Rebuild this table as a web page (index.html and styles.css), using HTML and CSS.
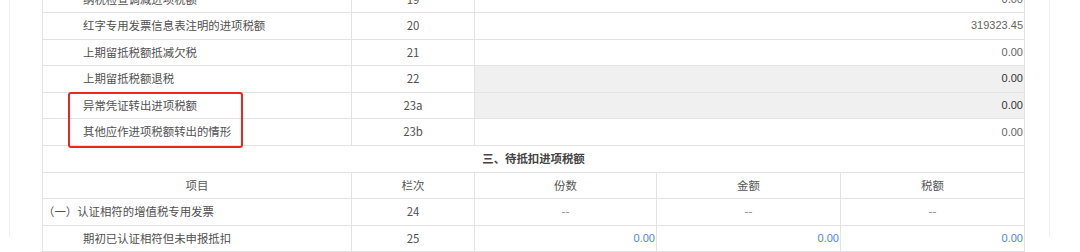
FILE: index.html
```html
<!DOCTYPE html>
<html lang="zh-CN">
<head>
<meta charset="utf-8">
<title>进项税额明细</title>
<link rel="stylesheet" href="styles.css">
</head>
<body>
<div class="panel">
  <div class="sheet">
    <div class="grid">
      <div class="c lbl ind">纳税检查调减进项税额</div><div class="c no">19</div><div class="c val span3">0.00</div>
      <div class="c lbl ind">红字专用发票信息表注明的进项税额</div><div class="c no">20</div><div class="c val span3">319323.45</div>
      <div class="c lbl ind">上期留抵税额抵减欠税</div><div class="c no">21</div><div class="c val span3">0.00</div>
      <div class="c lbl ind">上期留抵税额退税</div><div class="c no">22</div><div class="c val span3 ro">0.00</div>
      <div class="c lbl ind">异常凭证转出进项税额</div><div class="c no">23a</div><div class="c val span3 ro">0.00</div>
      <div class="c lbl ind">其他应作进项税额转出的情形</div><div class="c no">23b</div><div class="c val span3">0.00</div>
      <div class="c sec">三、待抵扣进项税额</div>
      <div class="c hd">项目</div><div class="c hd">栏次</div><div class="c hd">份数</div><div class="c hd">金额</div><div class="c hd">税额</div>
      <div class="c lbl">（一）认证相符的增值税专用发票</div><div class="c no">24</div><div class="c dash">--</div><div class="c dash">--</div><div class="c dash">--</div>
      <div class="c lbl ind">期初已认证相符但未申报抵扣</div><div class="c no">25</div><div class="c val blue">0.00</div><div class="c val blue">0.00</div><div class="c val blue">0.00</div>
    </div>
    <div class="mark"></div>
  </div>
</div>
</body>
</html>
```

FILE: styles.css
```css
html, body {
  margin: 0;
  padding: 0;
  background: #ffffff;
  height: 100%;
  overflow: hidden;
}

body {
  font-family: "Noto Sans CJK SC", "Microsoft YaHei", sans-serif;
  font-size: 11.4px;
  color: #505050;
}

.panel {
  box-sizing: border-box;
  margin-left: 9px;
  width: 1041px;
  height: 100vh;
  border-left: 1px solid #f0f0f0;
  border-right: 1px solid #f0f0f0;
  padding-left: 32px;
}

.sheet {
  position: relative;
  width: 983px;
  margin-top: -14.6px;
}

.grid {
  display: grid;
  grid-template-columns: 308px 122px 181px 183px 183px;
  grid-auto-rows: 25.6px;
  gap: 1px;
  background: #e3e3e3;
  border: 1px solid #e3e3e3;
}

.c {
  background: #ffffff;
  display: flex;
  align-items: center;
  white-space: nowrap;
  overflow: hidden;
  line-height: 1;
}

.lbl {
  padding-left: 0;
}

.lbl.ind {
  padding-left: 40px;
}

.no, .hd, .dash {
  justify-content: center;
}

.hd {
  color: #555555;
}

.dash {
  color: #888888;
}

.val {
  justify-content: flex-end;
  padding-right: 1px;
  font-family: "Liberation Sans", Arial, sans-serif;
  font-size: 11px;
  color: #666666;
}

.span3 {
  grid-column: span 3;
}

.ro {
  background: #f0f0f0;
  color: #333333;
}

.blue {
  color: #4a85f5;
}

.sec {
  grid-column: 1 / -1;
  justify-content: center;
  font-weight: bold;
  color: #444444;
}

.mark {
  position: absolute;
  left: 26px;
  top: 106.6px;
  width: 175px;
  height: 56px;
  box-sizing: border-box;
  border: 2px solid #e8281f;
  border-radius: 3px;
}
```
